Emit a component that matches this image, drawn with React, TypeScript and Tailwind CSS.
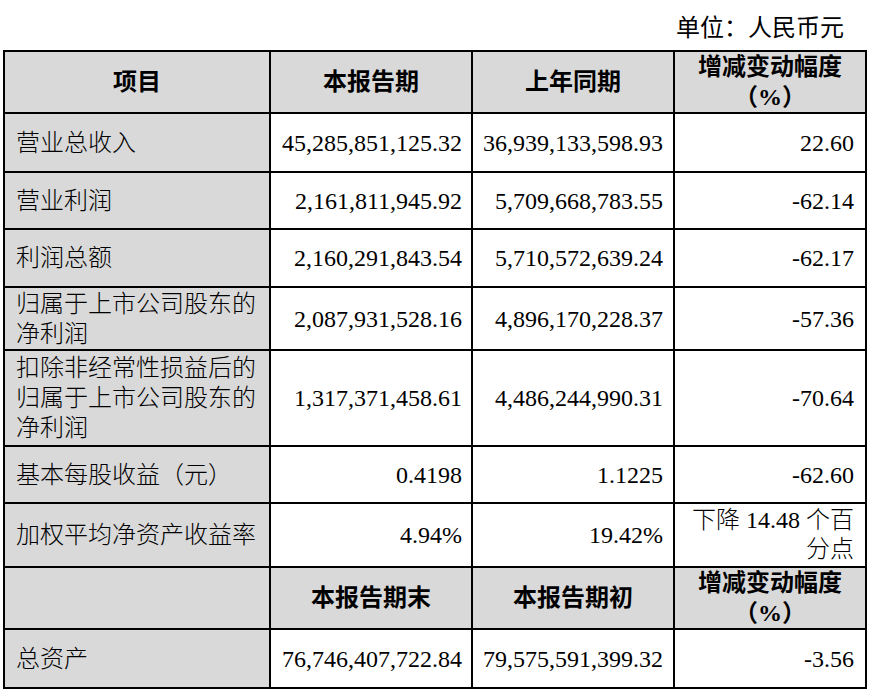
import React from "react";

const F = "font-['Liberation_Serif','Noto_Sans_CJK_SC',serif]";

type Row = {
  label: React.ReactNode;
  a: string;
  b: string;
  c: React.ReactNode;
  h: string;
};

const rows: Row[] = [
  { label: "营业总收入", a: "45,285,851,125.32", b: "36,939,133,598.93", c: "22.60", h: "h-[59px]" },
  { label: "营业利润", a: "2,161,811,945.92", b: "5,709,668,783.55", c: "-62.14", h: "h-[57px]" },
  { label: "利润总额", a: "2,160,291,843.54", b: "5,710,572,639.24", c: "-62.17", h: "h-[58px]" },
  {
    label: (
      <>
        归属于上市公司股东的
        <br />
        净利润
      </>
    ),
    a: "2,087,931,528.16",
    b: "4,896,170,228.37",
    c: "-57.36",
    h: "h-[63px]",
  },
  {
    label: (
      <>
        扣除非经常性损益后的
        <br />
        归属于上市公司股东的
        <br />
        净利润
      </>
    ),
    a: "1,317,371,458.61",
    b: "4,486,244,990.31",
    c: "-70.64",
    h: "h-[96px]",
  },
  { label: "基本每股收益（元）", a: "0.4198", b: "1.1225", c: "-62.60", h: "h-[57px]" },
  {
    label: "加权平均净资产收益率",
    a: "4.94%",
    b: "19.42%",
    c: (
      <span className="block leading-[29px]">
        下降 14.48 个百
        <br />
        分点
      </span>
    ),
    h: "h-[64px]",
  },
];

const cell = "border-2 border-black align-middle p-0";
const gray = "bg-[#d9d9d9]";

function HeaderRow({ cols, h }: { cols: string[]; h: string }) {
  return (
    <tr className={h}>
      <td className={`${cell} ${gray} text-center font-bold`}>{cols[0]}</td>
      <td className={`${cell} ${gray} text-center font-bold`}>{cols[1]}</td>
      <td className={`${cell} ${gray} text-center font-bold`}>{cols[2]}</td>
      <td className={`${cell} ${gray} text-center font-bold leading-[30px]`}>
        增减变动幅度
        <br />
        （%）
      </td>
    </tr>
  );
}

export default function App() {
  return (
    <div className={`w-[874px] h-[698px] bg-white text-black ${F} text-[24px]`}>
      <div className="h-[50px] pt-[13px] pr-[30px] text-right leading-[30px]">单位：人民币元</div>
      <table className="table-fixed border-collapse ml-[3px] w-[862px] leading-[30px]">
        <colgroup>
          <col className="w-[266px]" />
          <col className="w-[202px]" />
          <col className="w-[202px]" />
          <col className="w-[192px]" />
        </colgroup>
        <tbody>
          <HeaderRow cols={["项目", "本报告期", "上年同期"]} h="h-[62px]" />
          {rows.map((r, i) => (
            <tr key={i} className={r.h}>
              <td className={`${cell} ${gray} pl-[11px] text-left font-light`}>{r.label}</td>
              <td className={`${cell} pr-[9px] text-right`}>{r.a}</td>
              <td className={`${cell} pr-[10px] text-right`}>{r.b}</td>
              <td className={`${cell} pr-[11px] text-right font-light`}>{r.c}</td>
            </tr>
          ))}
          <tr className="h-[61px]">
            <td className={`${cell} ${gray}`}></td>
            <td className={`${cell} ${gray} text-center font-bold`}>本报告期末</td>
            <td className={`${cell} ${gray} text-center font-bold`}>本报告期初</td>
            <td className={`${cell} ${gray} text-center font-bold leading-[30px]`}>
              增减变动幅度
              <br />
              （%）
            </td>
          </tr>
          <tr className="h-[59px]">
            <td className={`${cell} ${gray} pl-[11px] text-left font-light`}>总资产</td>
            <td className={`${cell} pr-[9px] text-right`}>76,746,407,722.84</td>
            <td className={`${cell} pr-[10px] text-right`}>79,575,591,399.32</td>
            <td className={`${cell} pr-[11px] text-right`}>-3.56</td>
          </tr>
        </tbody>
      </table>
    </div>
  );
}
